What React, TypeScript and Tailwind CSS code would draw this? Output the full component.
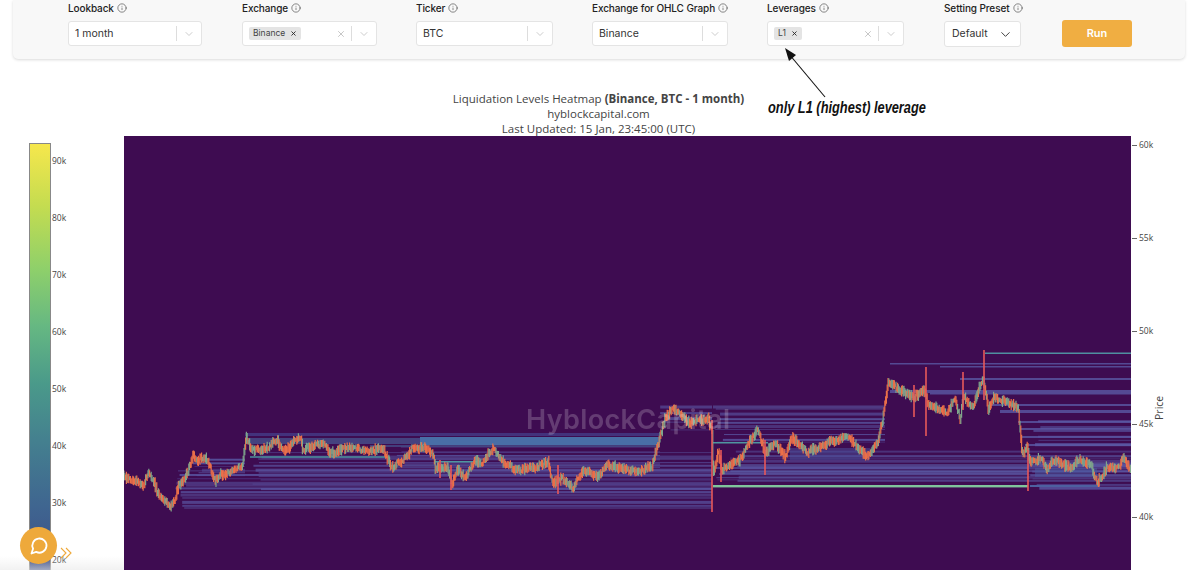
import { ChevronDown, Info, X } from "lucide-react";

const pts: [number, number][] = [
  [124, 476], [143, 485], [148, 473], [153, 480], [160, 498], [172, 507], [178, 488], [187, 473], [194, 453], [195, 460],
  [207, 458], [215, 482], [220, 475], [230, 472], [242, 465], [246, 437], [252, 450], [263, 450], [277, 440], [283, 452],
  [300, 437], [303, 450], [323, 443], [330, 453], [353, 447], [367, 452], [383, 448], [391, 468], [407, 457], [412, 448],
  [425, 448], [433, 453], [435, 468], [447, 467], [452, 485], [457, 470], [465, 477], [475, 460], [482, 463], [493, 448],
  [503, 462], [515, 470], [533, 468], [548, 462], [552, 483], [562, 478], [573, 488], [583, 470], [597, 477], [608, 465],
  [630, 470], [637, 473], [652, 465], [660, 437], [665, 418], [673, 408], [690, 423], [708, 418], [712, 433], [713, 473],
  [718, 453], [722, 470], [740, 460], [750, 440], [758, 430], [765, 453], [775, 443], [785, 457], [792, 438], [807, 452],
  [830, 442], [848, 437], [867, 457], [877, 443], [882, 422], [888, 383], [900, 390], [913, 397], [925, 390], [927, 403],
  [947, 413], [955, 397], [960, 420], [963, 397], [973, 407], [983, 377], [988, 410], [993, 398], [1010, 403], [1018, 408],
  [1022, 455], [1027, 447], [1030, 463], [1040, 458], [1047, 470], [1053, 460], [1072, 468], [1077, 460], [1090, 463],
  [1097, 483], [1107, 467], [1118, 468], [1123, 457], [1131, 470],
];

// red wicks that stick out of the price line
const wicks: [number, number, number][] = [
  [712, 420, 512], [1028, 450, 491], [984, 350, 400], [926, 367, 436], [765, 440, 475], [914, 385, 417],
  [721, 450, 482], [558, 465, 494], [451, 465, 490], [440, 460, 478], [963, 372, 410],
];

function rng(seed: number) {
  let s = seed;
  return () => {
    s = (s * 1664525 + 1013904223) % 4294967296;
    return s / 4294967296;
  };
}

function priceAt(x: number) {
  for (let i = 1; i < pts.length; i++) {
    if (x <= pts[i][0]) {
      const [x0, y0] = pts[i - 1];
      const [x1, y1] = pts[i];
      return y0 + ((y1 - y0) * (x - x0)) / (x1 - x0 || 1);
    }
  }
  return pts[pts.length - 1][1];
}

const candles = (() => {
  const r = rng(7);
  const out: { x: number; a: number; b: number; up: boolean }[] = [];
  let prev = priceAt(124);
  for (let x = 124; x < 1131; x += 0.8) {
    const y = priceAt(x) + (r() - 0.5) * 5;
    const len = 3 + r() * 6;
    out.push({ x, a: Math.min(prev, y) - len / 2, b: Math.max(prev, y) + len / 2, up: r() > 0.55 });
    prev = y;
  }
  return out;
})();

// groups of liquidation levels: x1, x2, top, bottom, count
const groups: [number, number, number, number, number][] = [
  [175, 712, 470, 510, 12],
  [250, 712, 450, 490, 11],
  [190, 245, 458, 478, 6],
  [395, 660, 445, 470, 6],
  [713, 1028, 466, 482, 5],
  [713, 885, 404, 445, 10],
  [730, 1131, 450, 482, 10],
  [1030, 1131, 420, 447, 6],
  [1030, 1131, 460, 490, 7],
  [660, 712, 405, 432, 5],
];

const levels = (() => {
  const r = rng(21);
  const out: { x1: number; x2: number; y: number; h: number; o: number }[] = [];
  for (const [x1, x2, top, bottom, n] of groups) {
    for (let i = 0; i < n; i++) {
      out.push({
        x1: x1 + r() * 12,
        x2,
        y: top + ((bottom - top) * (i + r() * 0.6)) / n,
        h: 1 + Math.floor(r() * 3),
        o: 0.4 + r() * 0.45,
      });
    }
  }
  return out;
})();

// lines seen right of the last highs
const rightLevels: [number, number, number][] = [
  [890, 363, 1.5], [940, 366, 1.5], [960, 378, 2], [890, 390, 3], [930, 393, 1.5], [990, 404, 2], [1000, 410, 3],
  [1018, 421, 2], [1020, 428, 2], [1022, 436, 2], [1025, 444, 2],
];

function Label({ text }: { text: string }) {
  return (
    <div className="flex items-center gap-[3px] h-[14px] whitespace-nowrap text-[10px] font-medium text-[#222] tracking-[-0.1px]">
      {text}
      <Info className="w-[10px] h-[10px] shrink-0 text-[#444]" strokeWidth={1.5} />
    </div>
  );
}

function Field({ label, width, value, chip, clear }: { label: string; width: string; value?: string; chip?: string; clear?: boolean }) {
  return (
    <div className={`flex flex-col ${width}`}>
      <Label text={label} />
      <div className="mt-[6px] h-[25px] bg-white border border-[#e4e4e4] rounded-[3px] flex items-center pl-[6px] text-[10.5px] text-[#333]">
        <div className="flex-1 flex items-center">
          {value}
          {chip && (
            <span className="flex items-center gap-[5px] h-[13px] bg-[#e4e4e4] rounded-[2px] px-[4px] text-[8.5px] text-[#444]">
              {chip}
              <X className="w-[7px] h-[7px] text-[#222]" strokeWidth={3} />
            </span>
          )}
        </div>
        {clear && <X className="w-[10px] h-[10px] text-[#bbb] mr-[5px]" strokeWidth={2} />}
        <div className="w-px h-[15px] bg-[#ddd]" />
        <ChevronDown className="w-[12px] h-[12px] text-[#bbb] mx-[6px]" strokeWidth={1.5} />
      </div>
    </div>
  );
}

function HeatmapPlot() {
  return (
    <svg className="block shrink-0 w-[1007px] h-[434px]" viewBox="124 136 1007 434">
      <defs>
        <filter id="soft" x="0" y="0" width="1" height="1">
          <feGaussianBlur stdDeviation="0.65" />
        </filter>
      </defs>
      <rect x="124" y="136" width="1007" height="434" fill="#3e0c51" />
      <g filter="url(#soft)">
        {levels.map((l, i) => (
          <rect key={i} x={l.x1} y={l.y} width={l.x2 - l.x1} height={l.h} fill="#5a58a4" opacity={l.o} />
        ))}
        {rightLevels.map(([x, y, h], i) => (
          <rect key={i} x={x} y={y} width={1131 - x} height={h} fill="#5a58a4" opacity="0.8" />
        ))}
        <rect x="245" y="438" width="175" height="6" fill="#4a6ea6" opacity="0.55" />
        <rect x="420" y="437" width="240" height="8" fill="#4a6ea6" />
        <rect x="245" y="433" width="415" height="3" fill="#47458f" opacity="0.7" />
        <rect x="370" y="445" width="290" height="2" fill="#46568f" opacity="0.7" />
        <rect x="250" y="456" width="140" height="2" fill="#4a8a98" opacity="0.8" />
        <rect x="435" y="461" width="45" height="1.5" fill="#4f95a0" />
        <rect x="713" y="442" width="55" height="1.5" fill="#4f95a0" />
        <rect x="790" y="448" width="80" height="12" fill="#4a4f9c" opacity="0.5" />
        <rect x="1035" y="468" width="62" height="9" fill="#4a5aa0" opacity="0.55" />
        <rect x="713" y="485" width="315" height="2.4" fill="#7fc49c" />
        <rect x="985" y="352.5" width="146" height="1.5" fill="#4f8fa0" />
        <rect x="1030" y="485" width="70" height="2" fill="#4d60a0" />
        {candles.map((c, i) => (
          <line key={i} x1={c.x} x2={c.x} y1={c.a} y2={c.b} stroke={c.up ? "#7fa58c" : "#ea6f4a"} strokeWidth="1.2" />
        ))}
        {wicks.map(([x, a, b], i) => (
          <line key={i} x1={x} x2={x} y1={a} y2={b} stroke="#e8585a" strokeWidth="1.6" />
        ))}
      </g>
      <text x="526" y="429" fontFamily="Inter, sans-serif" fontSize="27" fontWeight="600" fill="#ffffff" fillOpacity="0.2" textLength="204">
        HyblockCapital
      </text>
    </svg>
  );
}

export default function App() {
  return (
    <div className="relative w-[1200px] h-[570px] overflow-hidden bg-white font-['Inter',sans-serif]">
      {/* Settings bar */}
      <div className="mx-[13px] w-[1172px] h-[59px] bg-[#f8f8f8] rounded-b-[5px] shadow-[0_1px_3px_rgba(0,0,0,0.15)] flex pl-[55px] pt-[1px]">
        <Field label="Lookback" width="w-[134px]" value="1 month" />
        <Field label="Exchange" width="w-[135px] ml-[40px]" chip="Binance" clear />
        <Field label="Ticker" width="w-[137px] ml-[39px]" value="BTC" />
        <Field label="Exchange for OHLC Graph" width="w-[136px] ml-[39px]" value="Binance" />
        <Field label="Leverages" width="w-[137px] ml-[39px]" chip="L1" clear />
        <div className="flex flex-col w-[77px] ml-[40px]">
          <Label text="Setting Preset" />
          <div className="mt-[6px] h-[26px] bg-white border border-[#e4e4e4] rounded-[3px] flex items-center justify-between px-[7px] text-[10.5px] text-[#333]">
            Default
            <ChevronDown className="w-[15px] h-[15px] text-[#333]" strokeWidth={1.5} />
          </div>
        </div>
        <button className="ml-[41px] mt-[19px] w-[70px] h-[27px] rounded-[3px] bg-[#f0ae42] text-white text-[11px] font-semibold">Run</button>
      </div>

      {/* Chart title */}
      <div className="mt-[32px] h-[45px] pr-[3px] text-center text-[11.5px] leading-[15px] text-[#444] font-['Open_Sans',sans-serif]">
        <div>
          Liquidation Levels Heatmap <b>(Binance, BTC - 1 month)</b>
        </div>
        <div>hyblockcapital.com</div>
        <div>Last Updated: 15 Jan, 23:45:00 (UTC)</div>
      </div>

      {/* Colour bar, plot, price axis */}
      <div className="flex pl-[29px] font-['Open_Sans',sans-serif] text-[8.5px] text-[#444]">
        <div className="mt-[7px] w-[22px] h-[480px] shrink-0 border border-[#888] bg-[linear-gradient(to_bottom,#f6e74c_0%,#c4dc50_13%,#8fd06a_26%,#66b882_38%,#4a9a8a_50%,#44808f_62%,#3f6590_76%,#3c4a86_90%,#3a3f80_100%)]" />
        <div className="w-[73px] shrink-0 pl-[1px] pt-[19px] flex flex-col">
          {["90k", "80k", "70k", "60k", "50k", "40k", "30k", "20k"].map((t) => (
            <div key={t} className="h-[57px] leading-[12px]">
              {t}
            </div>
          ))}
        </div>
        <HeatmapPlot />
        <div className="flex flex-col pt-[3px]">
          {["60k", "55k", "50k", "45k", "40k"].map((t) => (
            <div key={t} className="h-[93px] flex items-start">
              <span className="flex items-center h-[12px] gap-[2px]">
                <span className="w-[5px] h-px bg-[#666] ml-[1px]" />
                {t}
              </span>
            </div>
          ))}
        </div>
      </div>

      <span className="absolute left-[1148px] top-[400px] -rotate-90 text-[10.5px] text-[#444] font-['Open_Sans',sans-serif]">Price</span>

      {/* Annotation */}
      <svg className="absolute left-[770px] top-[40px] w-[70px] h-[70px]" viewBox="770 40 70 70">
        <line x1="825" y1="97" x2="789" y2="54" stroke="#111" strokeWidth="1.1" />
        <polygon points="785,48 796,55 789,61" fill="#111" />
      </svg>
      <span className="absolute left-[768px] top-[99px] w-[157px] whitespace-nowrap origin-left scale-x-[0.8] text-[16px] leading-[18px] font-bold italic text-[#111] font-['Liberation_Sans',sans-serif]">
        only L1 (highest) leverage
      </span>

      {/* Chat button */}
      <div className="absolute left-0 bottom-0 w-[124px] h-[14px] bg-gradient-to-b from-transparent to-[#e9e9e9]/60" />
      <div className="absolute left-[20px] top-[527px] w-[37px] h-[37px] rounded-full bg-[#eea93b] flex items-center justify-center">
        <svg className="w-[20px] h-[20px]" viewBox="0 0 24 24" fill="none" stroke="#fff" strokeWidth="2.2" strokeLinejoin="round">
          <path d="M3 21l1.9-5.7A8.5 8.5 0 1 1 8.7 19.1L3 21z" />
        </svg>
      </div>
      <svg className="absolute left-[60px] top-[547px] w-[13px] h-[12px]" viewBox="0 0 13 12" fill="none" stroke="#eea93b" strokeWidth="1.1">
        <path d="M1 1l5 5-5 5M6 1l5 5-5 5" />
      </svg>
    </div>
  );
}
